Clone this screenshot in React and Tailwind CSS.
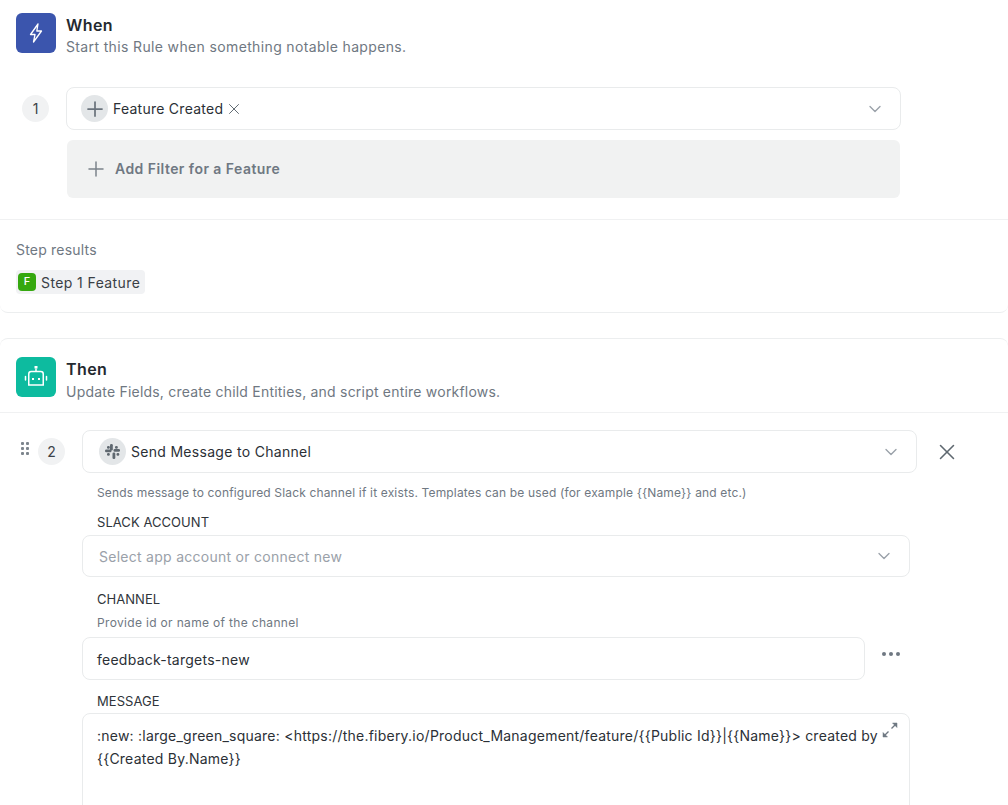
import { ChevronDown, Plus, X } from 'lucide-react'

function Chevron() {
  return <ChevronDown size={20} strokeWidth={1.6} className="text-[#9aa1a9] shrink-0 -mr-[2px]" />
}

function IconCircle({ children }) {
  return (
    <span className="w-[27px] h-[27px] rounded-full bg-[#e3e6e8] flex items-center justify-center shrink-0 [background-image:radial-gradient(#c6cacd_0.6px,transparent_0.7px)] [background-size:2px_2px]">
      {children}
    </span>
  )
}

function StepNumber({ n }) {
  return (
    <span className="w-[27px] h-[27px] rounded-full bg-[#f1f2f3] flex items-center justify-center text-sm text-[#3c4248] shrink-0">
      {n}
    </span>
  )
}

function Header({ color, icon, title, children }) {
  return (
    <div className="flex gap-[10px]">
      <div className={`w-10 h-10 rounded-md flex items-center justify-center shrink-0 ${color}`}>{icon}</div>
      <div>
        <div className="text-base leading-6 font-semibold text-[#24292f] tracking-[0.4px]">{title}</div>
        {children}
      </div>
    </div>
  )
}

function FieldLabel({ children }) {
  return <div className="text-[13px] leading-4 text-[#2f353b] tracking-[0.05px]">{children}</div>
}

export default function App() {
  return (
    <div className="h-[805px] w-[1008px] overflow-hidden bg-white font-['Inter',sans-serif]">
      {/* When */}
      <div className="h-[313px] border-b border-[#eceeef] rounded-b-lg">
        <div className="pt-[13px] pl-4">
          <Header
            color="bg-[#3b55ad]"
            icon={
              <svg width="14" height="20" viewBox="0 0 14 20" fill="none" stroke="white" strokeWidth="1.3" strokeLinejoin="round">
                <path d="M9 1 1.5 11.5H6L4.5 19l8-11H7.8Z" />
              </svg>
            }
            title="When"
          >
            <div className="text-sm leading-[17px] mt-px text-[#6f7882] tracking-[0.36px]">
              Start this Rule when something notable happens.
            </div>
          </Header>
        </div>

        <div className="flex mt-[32px] pl-[22px]">
          <div className="mt-2 mr-[17px]">
            <StepNumber n="1" />
          </div>
          <div className="w-[835px]">
            <div className="h-[43px] rounded-lg border border-[#e9ebec] flex items-center pl-[14px] pr-[17px]">
              <IconCircle>
                <Plus size={24} strokeWidth={1.75} className="text-[#6b747d]" />
              </IconCircle>
              <span className="ml-[5px] text-sm text-[#2b3036] tracking-[0.25px]">Feature Created</span>
              <X size={18} strokeWidth={1.3} className="ml-[2px] text-[#5f6870]" />
              <span className="flex-1" />
              <Chevron />
            </div>
            <div className="mt-[10px] mx-px h-[58px] rounded-md bg-[#f1f2f2] flex items-center pl-[17px] text-sm font-semibold text-[#6f7882] tracking-[0.45px]">
              <Plus size={24} strokeWidth={1.5} className="text-[#7b838b]" />
              <span className="ml-[7px]">Add Filter for a Feature</span>
            </div>
          </div>
        </div>

        <div className="mt-[21px] border-t border-[#f0f1f2] pt-[21px] pl-4">
          <div className="text-sm leading-[17px] text-[#6f7882] tracking-[0.2px]">Step results</div>
          <div className="mt-[12px] w-[129px] h-6 rounded bg-[#f1f2f4] flex items-center pl-[2px] text-sm text-[#3a4046]">
            <span className="w-[18px] h-[18px] rounded bg-[#35a80f] text-white text-[11px] font-medium flex items-center justify-center">
              F
            </span>
            <span className="ml-[5px] pt-px tracking-[0.4px]">Step 1 Feature</span>
          </div>
        </div>
      </div>

      {/* Then */}
      <div className="mt-[25px] border-t border-[#eceeef] rounded-t-lg">
        <div className="pt-[18px] pl-4 pb-[12px] border-b border-[#f0f1f2]">
          <Header
            color="bg-[#0dbb9f]"
            icon={
              <svg width="24" height="24" viewBox="0 0 24 24" fill="none" stroke="white" strokeWidth="1.5">
                <rect x="10.5" y="1" width="3" height="2.5" fill="white" stroke="none" />
                <path d="M12 3.5v3" />
                <path d="M4.75 20V9a2.5 2.5 0 0 1 2.5-2.5h9.5a2.5 2.5 0 0 1 2.5 2.5v11Z" />
                <path d="M8 14h2M14 14h2" strokeWidth="2" />
                <path d="M1.5 11.5v3.5M22.5 11.5v3.5" strokeLinecap="round" />
              </svg>
            }
            title="Then"
          >
            <div className="text-sm leading-[17px] mt-[2px] text-[#6f7882] tracking-[0.21px]">
              Update Fields, create child Entities, and script entire workflows.
            </div>
          </Header>
        </div>

        <div className="flex pt-[17px]">
          <div className="w-[82px] shrink-0 flex items-start pl-[20px] pt-2">
            <svg width="10" height="13" viewBox="0 0 10 13" fill="#7d858d" className="mt-[4px] mr-[8px] shrink-0">
              <rect x="1" y="0" width="3" height="3" rx="1" />
              <rect x="6" y="0" width="3" height="3" rx="1" />
              <rect x="1" y="5" width="3" height="3" rx="1" />
              <rect x="6" y="5" width="3" height="3" rx="1" />
              <rect x="1" y="10" width="3" height="3" rx="1" />
              <rect x="6" y="10" width="3" height="3" rx="1" />
            </svg>
            <StepNumber n="2" />
          </div>

          <div className="flex-1">
            <div className="flex items-center">
              <div className="w-[835px] h-[43px] rounded-lg border border-[#e9ebec] flex items-center pl-[16px] pr-[17px]">
                <IconCircle>
                  <svg width="17" height="17" viewBox="0 0 17 17" fill="#5f6870">
                    <rect x="6" y="1" width="2.8" height="6.5" rx="1.2" />
                    <rect x="1" y="6.5" width="6.5" height="2.8" rx="1.2" />
                    <rect x="9.5" y="6" width="6.5" height="2.8" rx="1.2" />
                    <rect x="8.5" y="9.5" width="2.8" height="6.5" rx="1.2" />
                    <rect x="3" y="10" width="2.8" height="2.8" rx="1.2" />
                    <rect x="11" y="3" width="2.8" height="2.8" rx="1.2" />
                    <rect x="12.5" y="10" width="2.8" height="2.8" rx="1.2" />
                    <rect x="3" y="3" width="2.8" height="2.8" rx="1.2" />
                  </svg>
                </IconCircle>
                <span className="ml-[5px] text-sm text-[#2b3036] tracking-[0.3px]">Send Message to Channel</span>
                <span className="flex-1" />
                <Chevron />
              </div>
              <X size={26} strokeWidth={1.4} className="ml-[17px] text-[#5f6870]" />
            </div>

            <div className="mt-[12px] ml-[15px] text-xs leading-4 text-[#6f7882] tracking-[0.16px]">
              Sends message to configured Slack channel if it exists. Templates can be used (for example {'{{Name}}'} and etc.)
            </div>

            <div className="mt-[13px] ml-[15px]">
              <FieldLabel>SLACK ACCOUNT</FieldLabel>
            </div>
            <div className="mt-[5px] w-[828px] h-[42px] rounded-lg border border-[#e9ebec] flex items-center pl-4 pr-[17px] text-sm text-[#9aa1a9] tracking-[0.27px]">
              <span className="flex-1 pt-px">Select app account or connect new</span>
              <Chevron />
            </div>

            <div className="mt-[14px] ml-[15px]">
              <FieldLabel>CHANNEL</FieldLabel>
              <div className="mt-[8px] text-xs leading-[15px] text-[#6f7882] tracking-[0.33px]">Provide id or name of the channel</div>
            </div>
            <div className="mt-[7px] flex items-center">
              <div className="w-[783px] h-[43px] rounded-lg border border-[#e9ebec] flex items-center pl-[14px] pt-[2px] text-sm text-[#2b3036] tracking-[0.25px]">
                feedback-targets-new
              </div>
              <span className="ml-[17px] mb-[10px] flex gap-[3px]">
                <span className="w-[4px] h-[4px] rounded-full bg-[#6f7882]" />
                <span className="w-[4px] h-[4px] rounded-full bg-[#6f7882]" />
                <span className="w-[4px] h-[4px] rounded-full bg-[#6f7882]" />
              </span>
            </div>

            <div className="mt-[13px] ml-[15px]">
              <FieldLabel>MESSAGE</FieldLabel>
            </div>
            <div className="mt-[4px] relative w-[828px] h-[140px] rounded-lg border border-[#e9ebec] pl-[14px] pt-[10px] text-sm leading-[23px] text-[#2b3036] tracking-[0.23px]">
              <div className="w-[790px]">
                :new: :large_green_square: &lt;https://the.fibery.io/Product_Management/feature/{'{{Public Id}}'}|{'{{Name}}'}&gt; created by {'{{Created By.Name}}'}
              </div>
              <svg width="16" height="16" viewBox="0 0 16 16" fill="#6f7882" stroke="#6f7882" strokeWidth="1.4" className="absolute top-[8px] right-[11px]">
                <path d="M9.5 6.5 14 2M6.5 9.5 2 14" fill="none" />
                <path d="M10.5 1h4.5v4.5ZM5.5 15H1v-4.5Z" strokeWidth="0.5" />
              </svg>
            </div>
          </div>
        </div>
      </div>
    </div>
  )
}
